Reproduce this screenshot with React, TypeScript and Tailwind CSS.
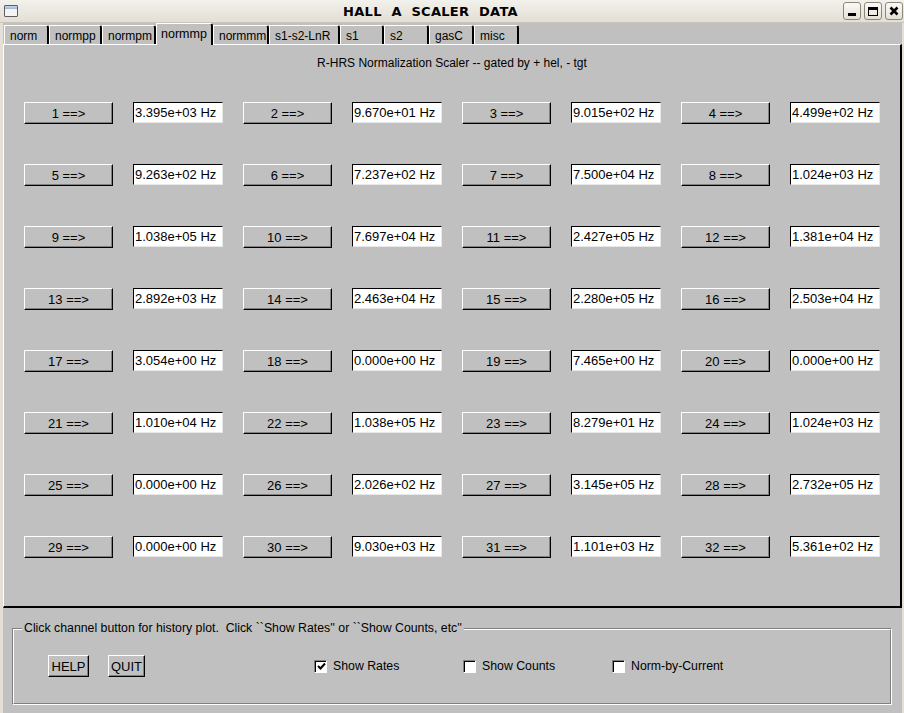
import React from "react";

const tabs = [
  { label: "norm", w: 45 },
  { label: "normpp", w: 53 },
  { label: "normpm", w: 54 },
  { label: "normmp", w: 57, active: true },
  { label: "normmm", w: 56 },
  { label: "s1-s2-LnR", w: 71 },
  { label: "s1", w: 44 },
  { label: "s2", w: 45 },
  { label: "gasC", w: 45 },
  { label: "misc", w: 45 },
];

const values = [
  "3.395e+03", "9.670e+01", "9.015e+02", "4.499e+02",
  "9.263e+02", "7.237e+02", "7.500e+04", "1.024e+03",
  "1.038e+05", "7.697e+04", "2.427e+05", "1.381e+04",
  "2.892e+03", "2.463e+04", "2.280e+05", "2.503e+04",
  "3.054e+00", "0.000e+00", "7.465e+00", "0.000e+00",
  "1.010e+04", "1.038e+05", "8.279e+01", "1.024e+03",
  "0.000e+00", "2.026e+02", "3.145e+05", "2.732e+05",
  "0.000e+00", "9.030e+03", "1.101e+03", "5.361e+02",
];

function TitleButton({ children }: { children: React.ReactNode }) {
  return (
    <div className="w-[18px] h-[18px] rounded-[3px] border border-[#8c8679] bg-gradient-to-b from-[#fbfaf7] to-[#e4e0d7] flex items-center justify-center">
      {children}
    </div>
  );
}

function Checkbox({ checked }: { checked?: boolean }) {
  return (
    <div className="w-[13px] h-[13px] border-t border-l border-t-[#808080] border-l-[#808080] border-b border-r border-b-white border-r-white">
      <div className="w-full h-full bg-white border-t border-l border-t-black border-l-black flex items-center justify-center">
        {checked && (
          <svg width="9" height="9" viewBox="0 0 9 9">
            <path d="M1 4 L3.5 6.5 L8 1.5" stroke="#000" strokeWidth="2" fill="none" />
          </svg>
        )}
      </div>
    </div>
  );
}

function TkButton({ children, className }: { children: React.ReactNode; className?: string }) {
  return (
    <div
      className={
        "flex items-center justify-center bg-[#c0c0c0] border-t border-l border-t-white border-l-white border-b border-r border-b-black border-r-black shadow-[inset_-1px_-1px_0_#808080] " +
        (className ?? "")
      }
    >
      {children}
    </div>
  );
}

export default function App() {
  return (
    <div
      className="w-[904px] h-[713px] bg-[#e4e0d8] flex flex-col overflow-hidden text-black text-[13px] leading-none"
      style={{ fontFamily: '"Liberation Sans", Helvetica, Arial, sans-serif' }}
    >
      {/* Title bar */}
      <div className="h-[23px] shrink-0 flex items-center bg-gradient-to-b from-[#f3f1ec] to-[#e3dfd6] border-b border-b-[#cbc5b9]">
        <div className="ml-[4px] w-[14px] h-[12px] border border-[#5d5d5d] rounded-[1px] bg-white flex flex-col">
          <div className="h-[3px] bg-gradient-to-b from-[#c9d6ea] to-[#9fb3d2]" />
          <div className="flex-1 bg-[#f4f4f4]" />
        </div>
        <div
          className="flex-1 text-center font-bold text-[13px] whitespace-pre tracking-[0.3px]"
          style={{ fontFamily: '"DejaVu Sans", "Liberation Sans", sans-serif' }}
        >
          {"HALL  A  SCALER  DATA"}
        </div>
        <div className="flex gap-[3px] mr-[1px]">
          <TitleButton>
            <div className="w-[8px] h-[3px] bg-black mt-[7px]" />
          </TitleButton>
          <TitleButton>
            <div className="w-[10px] h-[9px] border border-black border-t-[3px]" />
          </TitleButton>
          <TitleButton>
            <svg width="10" height="10" viewBox="0 0 10 10">
              <path d="M1.5 1.5 L8.5 8.5 M8.5 1.5 L1.5 8.5" stroke="#000" strokeWidth="2.6" />
            </svg>
          </TitleButton>
        </div>
      </div>

      {/* Body */}
      <div className="flex-1 flex flex-col bg-[#c0c0c0] ml-[3px] mr-[2px]">
        {/* Tabs */}
        <div className="h-[21px] shrink-0 flex items-end pl-[1px] text-[12px]">
          {tabs.map((t) =>
            t.active ? (
              <div
                key={t.label}
                style={{ width: t.w }}
                className="relative z-10 h-[22px] -mb-px bg-[#c0c0c0] border-t border-l border-t-white border-l-white border-r-2 border-r-black rounded-tr-[3px] pl-[4px] pt-[4px] whitespace-nowrap text-[12.5px]"
              >
                {t.label}
              </div>
            ) : (
              <div
                key={t.label}
                style={{ width: t.w }}
                className="h-[19px] bg-[#c0c0c0] border-t border-l border-t-white border-l-white border-r-2 border-r-black rounded-tr-[3px] pl-[5px] pt-[4px] whitespace-nowrap"
              >
                {t.label}
              </div>
            )
          )}
        </div>

        {/* Main panel */}
        <div className="h-[564px] shrink-0 border-t border-l border-t-white border-l-white border-r-2 border-b-2 border-r-black border-b-black flex flex-col pl-[20px]">
          <div className="pt-[12px] h-[57px] text-center text-[12px] pr-[20px]">
            R-HRS Normalization Scaler -- gated by + hel, - tgt
          </div>
          <div className="grid grid-cols-[199px_199px_199px_199px] gap-x-[20px] gap-y-[40px]">
            {values.map((v, i) => (
              <div key={i} className="flex items-start gap-[20px] h-[22px]">
                <TkButton className="w-[89px] h-[22px]">{`${i + 1} ==>`}</TkButton>
                <div className="w-[90px] h-[21px] bg-white border-t border-l border-t-black border-l-black border-b border-r border-b-[#e8e8e8] border-r-[#e8e8e8] flex items-center pl-[1px] whitespace-pre">
                  {`${v} Hz`}
                </div>
              </div>
            ))}
          </div>
        </div>

        {/* Bottom controls */}
        <div className="flex-1 pt-[20px] pl-[9px] pr-[10px] text-[12.3px]">
          <div className="relative h-[77px] border-t border-l border-t-[#808080] border-l-[#808080] border-b border-r border-b-white border-r-white">
            <div className="h-full border-t border-l border-t-white border-l-white border-b border-r border-b-[#808080] border-r-[#808080] flex items-start pt-[25px] pl-[34px]">
              <TkButton className="w-[41px] h-[22px] text-[13px]">HELP</TkButton>
              <TkButton className="w-[37px] h-[22px] ml-[19px] text-[13px]">QUIT</TkButton>
              <div className="ml-[169px] flex h-[22px] items-center">
                <div className="w-[149px] flex items-center gap-[6px]">
                  <Checkbox checked />
                  <span>Show Rates</span>
                </div>
                <div className="w-[149px] flex items-center gap-[6px]">
                  <Checkbox />
                  <span>Show Counts</span>
                </div>
                <div className="flex items-center gap-[6px]">
                  <Checkbox />
                  <span>Norm-by-Current</span>
                </div>
              </div>
            </div>
            <div className="absolute left-[9px] -top-[7px] px-[2px] bg-[#c0c0c0] whitespace-pre leading-[13px]">
              {"Click channel button for history plot.  Click ``Show Rates'' or ``Show Counts, etc''"}
            </div>
          </div>
        </div>
      </div>
    </div>
  );
}
